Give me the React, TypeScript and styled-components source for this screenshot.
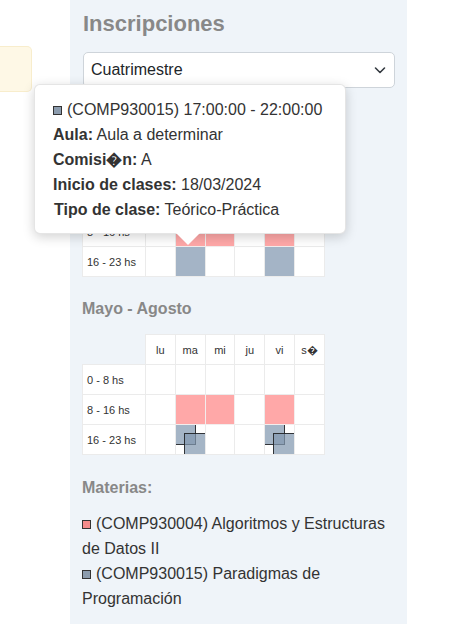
import React from "react";
import styled, { createGlobalStyle } from "styled-components";

const Global = createGlobalStyle`
  html, body { margin: 0; padding: 0; background: #fff; }
  body { font-family: "Liberation Sans", Arial, sans-serif; color: #333; }
  * { box-sizing: border-box; }
`;

const Page = styled.div`
  position: relative;
  display: flex;
  align-items: flex-start;
  width: 461px;
  height: 624px;
  overflow: hidden;
`;

const LeftCol = styled.div`
  width: 70px;
  flex: none;
  padding-top: 46px;
`;

const Alert = styled.div`
  width: 32px;
  height: 46px;
  background: #fef8e6;
  border: 1px solid #f8edcc;
  border-left: none;
  border-radius: 0 5px 5px 0;
`;

const Panel = styled.div`
  width: 337px;
  flex: none;
  min-height: 624px;
  background: #eff4f9;
  padding: 10px 12px 0 12px;
`;

const Title = styled.h2`
  margin: 0;
  font-size: 22px;
  line-height: 28px;
  font-weight: bold;
  color: #888;
  padding-left: 1px;
`;

const SelectBox = styled.div`
  margin-top: 14px;
  margin-left: 1px;
  width: 312px;
  height: 36px;
  background: #fff;
  border: 1px solid #ced4da;
  border-radius: 5px;
  display: flex;
  align-items: center;
  justify-content: space-between;
  padding: 0 6px 0 7px;
  font-size: 16px;
  color: #212529;
`;

const SectionTitle = styled.h4<{ $mt: number }>`
  margin: ${(p) => p.$mt}px 0 0 0;
  font-size: 16px;
  line-height: 20px;
  font-weight: bold;
  color: #888;
`;

const Table = styled.table<{ $mt: number }>`
  margin-top: ${(p) => p.$mt}px;
  border-collapse: collapse;
  table-layout: fixed;
  width: 242px;
  font-size: 11px;
  color: #333;
`;

const Th = styled.th<{ $empty?: boolean }>`
  height: 30px;
  font-weight: normal;
  text-align: center;
  background: ${(p) => (p.$empty ? "transparent" : "#fff")};
  border: ${(p) => (p.$empty ? "none" : "1px solid #ebebeb")};
  padding: 0;
`;

const LabelTd = styled.td`
  height: 30px;
  background: #fff;
  border: 1px solid #ebebeb;
  padding: 0 0 0 4px;
  white-space: nowrap;
`;

const Td = styled.td<{ $kind?: "pink" | "blue" | "" }>`
  height: 30px;
  padding: 0;
  border: 1px solid ${(p) => (p.$kind === "pink" ? "#f3eded" : "#ebebeb")};
  background: ${(p) =>
    p.$kind === "pink" ? "#ffa8a8" : p.$kind === "blue" ? "#a4b4c6" : "#fff"};
`;

const CellInner = styled.div`
  position: relative;
  width: 100%;
  height: 29px;
  overflow: hidden;
`;

const OverlapBox = styled.div<{ $pos: "a" | "b" }>`
  position: absolute;
  left: ${(p) => (p.$pos === "a" ? "-12px" : "8px")};
  top: ${(p) => (p.$pos === "a" ? "-12px" : "8px")};
  width: 32px;
  height: 32px;
  border: 1.5px solid rgba(20, 20, 20, 0.8);
  background: rgba(130, 152, 176, 0.72);
`;

const Tooltip = styled.div`
  position: absolute;
  left: 34px;
  top: 84px;
  width: 312px;
  height: 150px;
  background: #fff;
  border-radius: 6px;
  border: 1px solid rgba(0, 0, 0, 0.1);
  box-shadow: 0 3px 12px rgba(0, 0, 0, 0.18);
  padding: 12px 18px;
  font-size: 16px;
  line-height: 25px;
  color: #333;
  white-space: nowrap;
`;

const TipArrow = styled.div`
  position: absolute;
  left: 141px;
  top: 100%;
  width: 0;
  height: 0;
  border-left: 12px solid transparent;
  border-right: 12px solid transparent;
  border-top: 12px solid #fff;
`;

const TipLine = styled.div<{ $indent?: number }>`
  padding-left: ${(p) => p.$indent ?? 0}px;
`;

const MateriasList = styled.div`
  margin-top: 13px;
  font-size: 16px;
  line-height: 25px;
  color: #333;
  width: 312px;
`;

const Swatch = styled.span<{ $color: string }>`
  display: inline-block;
  width: 9px;
  height: 9px;
  border: 1px solid #333;
  background: ${(p) => p.$color};
  margin-right: 5px;
  vertical-align: 0px;
`;

const days = ["lu", "ma", "mi", "ju", "vi", "s\uFFFD"];
const rows = ["0 - 8 hs", "8 - 16 hs", "16 - 23 hs"];

type Kind = "pink" | "blue" | "overlap" | "";

function Schedule({ mt, grid }: { mt: number; grid: Kind[][] }) {
  return (
    <Table $mt={mt}>
      <colgroup>
        <col style={{ width: 63 }} />
        {days.map((d) => (
          <col key={d} style={{ width: 29.8 }} />
        ))}
      </colgroup>
      <thead>
        <tr>
          <Th $empty />
          {days.map((d) => (
            <Th key={d}>{d}</Th>
          ))}
        </tr>
      </thead>
      <tbody>
        {rows.map((r, ri) => (
          <tr key={r}>
            <LabelTd>{r}</LabelTd>
            {grid[ri].map((k, ci) =>
              k === "overlap" ? (
                <Td key={ci}>
                  <CellInner>
                    <OverlapBox $pos="a" />
                    <OverlapBox $pos="b" />
                  </CellInner>
                </Td>
              ) : (
                <Td key={ci} $kind={k} />
              )
            )}
          </tr>
        ))}
      </tbody>
    </Table>
  );
}

const grid1: Kind[][] = [
  ["", "", "", "", "", ""],
  ["", "pink", "pink", "", "pink", ""],
  ["", "blue", "", "", "blue", ""],
];

const grid2: Kind[][] = [
  ["", "", "", "", "", ""],
  ["", "pink", "pink", "", "pink", ""],
  ["", "overlap", "", "", "overlap", ""],
];

export default function App() {
  return (
    <>
      <Global />
      <Page>
        <LeftCol>
          <Alert />
        </LeftCol>
        <Panel>
          <Title>Inscripciones</Title>
          <SelectBox>
            <span>Cuatrimestre</span>
            <svg width="16" height="16" viewBox="0 0 16 16" fill="none">
              <path d="M3.5 6l4.5 4.5 4.5-4.5" stroke="#343a40" strokeWidth="1.6" strokeLinecap="round" strokeLinejoin="round" />
            </svg>
          </SelectBox>
          <SectionTitle $mt={33}>Marzo - Julio</SectionTitle>
          <Schedule mt={15} grid={grid1} />
          <SectionTitle $mt={22}>Mayo - Agosto</SectionTitle>
          <Schedule mt={15} grid={grid2} />
          <SectionTitle $mt={23}>Materias:</SectionTitle>
          <MateriasList>
            <div>
              <Swatch $color="#f58c8c" />
              (COMP930004) Algoritmos y Estructuras de Datos II
            </div>
            <div>
              <Swatch $color="#8c9cae" />
              (COMP930015) Paradigmas de Programación
            </div>
          </MateriasList>
        </Panel>
        <Tooltip>
          <TipLine>
            <Swatch $color="#8c9cae" />
            (COMP930015) 17:00:00 - 22:00:00
          </TipLine>
          <TipLine>
            <b>Aula:</b> Aula a determinar
          </TipLine>
          <TipLine>
            <b>Comisi{"\uFFFD"}n:</b> A
          </TipLine>
          <TipLine>
            <b>Inicio de clases:</b> 18/03/2024
          </TipLine>
          <TipLine $indent={1}>
            <b>Tipo de clase:</b> Teórico-Práctica
          </TipLine>
          <TipArrow />
        </Tooltip>
      </Page>
    </>
  );
}
